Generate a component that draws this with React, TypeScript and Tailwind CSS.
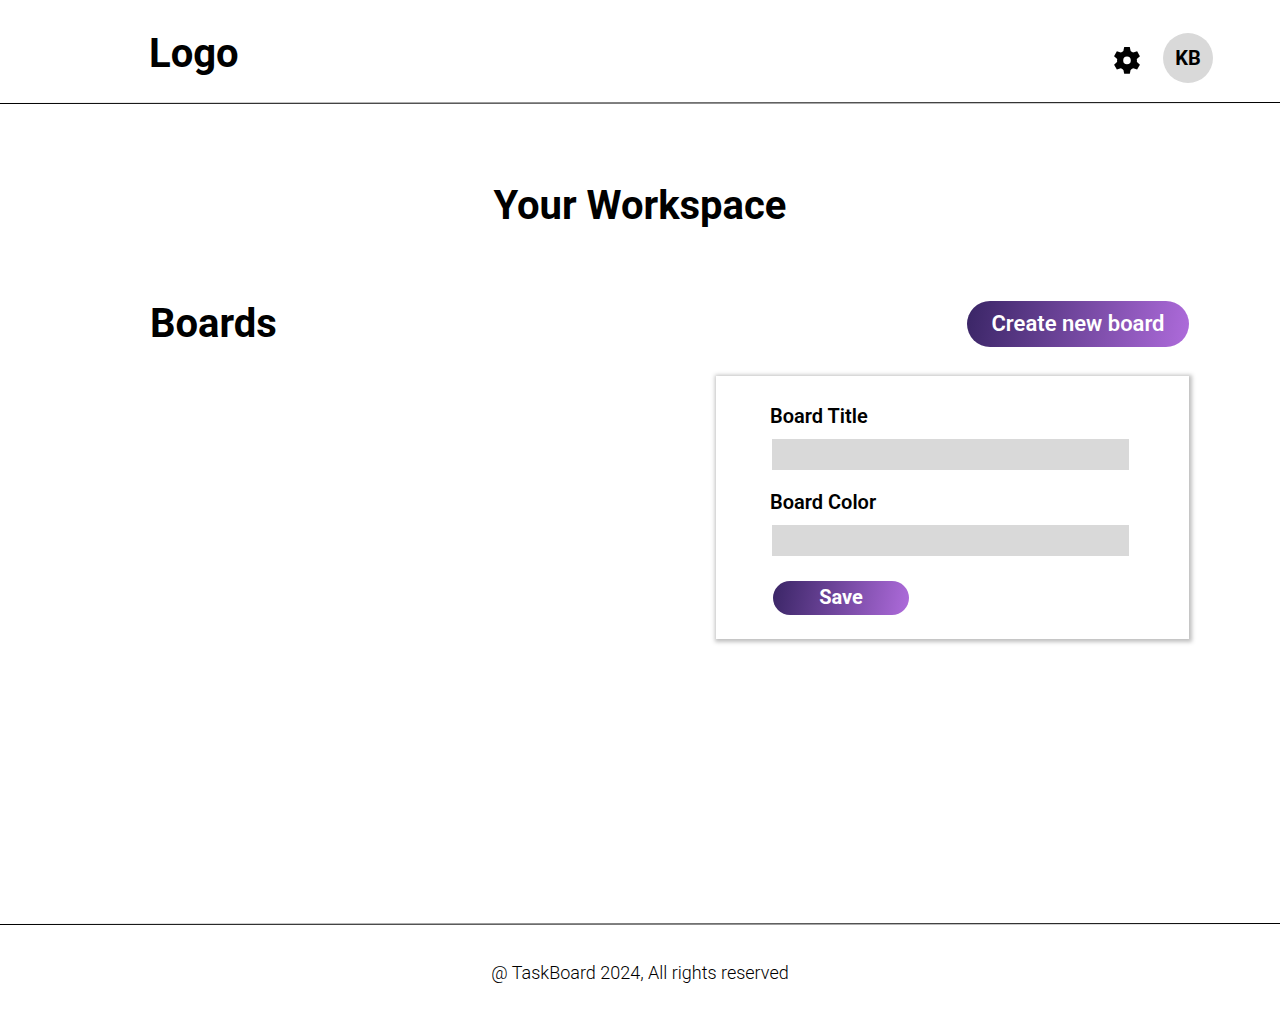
const gradient = "bg-[linear-gradient(100deg,#3b2667_1%,#ae6bdb_100%)]";

const TEETH = [0, 60, 120, 180, 240, 300];

function GearIcon() {
  return (
    <svg viewBox="0 0 26 28" className="h-7 w-[26px]" fill="currentColor" aria-hidden="true">
      <path
        fillRule="evenodd"
        d="M13 4.4a10 10 0 1 0 0 20a10 10 0 1 0 0-20Zm0 6.2a3.8 3.8 0 1 1 0 7.6a3.8 3.8 0 1 1 0-7.6Z"
      />
      {TEETH.map((angle) => (
        <path key={angle} d="M10.2 1.1h5.6l1.2 5.6h-8Z" transform={`rotate(${angle} 13 14.4)`} />
      ))}
    </svg>
  );
}

function Rule() {
  return (
    <svg viewBox="0 0 1280 2" preserveAspectRatio="none" className="block h-0.5 w-full" aria-hidden="true">
      <line x1="0" y1="1.5" x2="1280" y2="0.5" stroke="black" />
    </svg>
  );
}

function Field({ id, label }: { id: string; label: string }) {
  return (
    <div>
      <label htmlFor={id} className="-ml-0.5 block text-xl leading-6 font-semibold">
        {label}
      </label>
      <input id={id} type="text" className="mt-[11px] block h-[31px] w-full bg-[#d9d9d9] px-2 text-base outline-none" />
    </div>
  );
}

export default function App() {
  return (
    <div className="flex min-h-screen flex-col bg-white font-['Roboto',sans-serif] text-black">
      <header>
        <div className="flex items-start justify-between pt-[30px] pr-[67px] pb-[19px] pl-[149px]">
          <a href="#" className="text-[40px] leading-[47px] font-bold">
            Logo
          </a>
          <div className="flex items-center gap-[23px] pt-[3px]">
            <button type="button" aria-label="Settings" className="mt-1">
              <GearIcon />
            </button>
            <button type="button" className="size-[50px] rounded-full bg-[#d9d9d9] text-xl font-bold">
              KB
            </button>
          </div>
        </div>
        <Rule />
      </header>
      <main className="grow">
        <h1 className="mt-[78px] text-center text-[40px] leading-[47px] font-bold">Your Workspace</h1>
        <section className="pr-[91px] pl-[150px]">
          <div className="mt-[71px] flex items-center justify-between">
            <h2 className="text-[40px] leading-[47px] font-bold">Boards</h2>
            <button
              type="button"
              className={`${gradient} h-[46px] min-w-[222px] rounded-full px-6 text-[22px] font-semibold text-white`}
            >
              Create new board
            </button>
          </div>
          <form className="mt-[29px] ml-auto flex w-full max-w-[473px] flex-col gap-5 bg-white pt-7 pr-[60px] pb-6 pl-14 shadow-[1px_1px_4px_2px_rgba(0,0,0,0.25)]">
            <Field id="title" label="Board Title" />
            <Field id="color" label="Board Color" />
            <button
              type="button"
              className={`${gradient} mt-[5px] ml-px h-[34px] w-[136px] rounded-full pb-0.5 text-xl font-bold text-white`}
            >
              Save
            </button>
          </form>
        </section>
      </main>
      <footer>
        <Rule />
        <p className="pt-[37px] pb-[35px] text-center text-lg leading-[21px] font-light">
          @ TaskBoard 2024, All rights reserved
        </p>
      </footer>
    </div>
  );
}
